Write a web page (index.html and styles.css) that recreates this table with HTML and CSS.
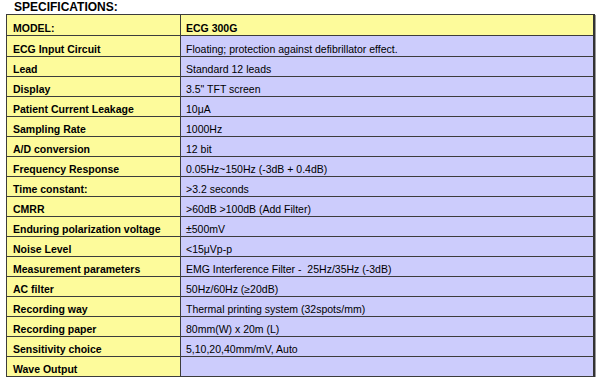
FILE: index.html
```html
<!DOCTYPE html>
<html>
<head>
<meta charset="utf-8">
<link rel="stylesheet" href="styles.css">
</head>
<body>
<div class="title">SPECIFICATIONS:</div>
<table class="spec">
  <tr class="tall"><td class="k">MODEL:</td><td class="v head">ECG 300G</td></tr>
  <tr class="tall"><td class="k">ECG Input Circuit</td><td class="v">Floating; protection against defibrillator effect.</td></tr>
  <tr><td class="k">Lead</td><td class="v">Standard 12 leads</td></tr>
  <tr><td class="k">Display</td><td class="v">3.5" TFT screen</td></tr>
  <tr><td class="k">Patient Current Leakage</td><td class="v">10μA</td></tr>
  <tr><td class="k">Sampling Rate</td><td class="v">1000Hz</td></tr>
  <tr><td class="k">A/D conversion</td><td class="v">12 bit</td></tr>
  <tr><td class="k">Frequency Response</td><td class="v">0.05Hz~150Hz (-3dB + 0.4dB)</td></tr>
  <tr><td class="k">Time constant:</td><td class="v">&gt;3.2 seconds</td></tr>
  <tr><td class="k">CMRR</td><td class="v">&gt;60dB &gt;100dB (Add Filter)</td></tr>
  <tr><td class="k">Enduring polarization voltage</td><td class="v">±500mV</td></tr>
  <tr><td class="k">Noise Level</td><td class="v">&lt;15μVp-p</td></tr>
  <tr><td class="k">Measurement parameters</td><td class="v">EMG Interference Filter -&nbsp; 25Hz/35Hz (-3dB)</td></tr>
  <tr><td class="k">AC filter</td><td class="v">50Hz/60Hz (≥20dB)</td></tr>
  <tr><td class="k">Recording way</td><td class="v">Thermal printing system (32spots/mm)</td></tr>
  <tr><td class="k">Recording paper</td><td class="v">80mm(W) x 20m (L)</td></tr>
  <tr><td class="k">Sensitivity choice</td><td class="v">5,10,20,40mm/mV, Auto</td></tr>
  <tr><td class="k">Wave Output</td><td class="v"></td></tr>
</table>
</body>
</html>
```
FILE: styles.css
```css
html, body {
  margin: 0;
  padding: 0;
  background: #ffffff;
}
body {
  font-family: "Liberation Sans", Arial, sans-serif;
  color: #000;
}
.title {
  margin-left: 14px;
  height: 13px;
  padding-top: 1px;
  font-size: 12px;
  line-height: 12px;
  font-weight: bold;
}
.spec {
  margin-left: 6px;
  width: 589px;
  border-collapse: collapse;
  table-layout: fixed;
  box-shadow: 1px 1px 0 #9a9a9a;
  border-right: 2px solid #333;
}
.spec tr {
  height: 20px;
}
.spec tr.tall {
  height: 21px;
}
.spec td {
  border: 1px solid #3c3c3c;
  font-size: 10.5px;
  line-height: 12px;
  vertical-align: bottom;
  padding: 0 0 1px 0;
  white-space: nowrap;
}
.spec td.k {
  width: 167px;
  background: #fdfb9b;
  font-weight: bold;
  padding-left: 6px;
}
.spec td.v {
  background: #ccccfc;
  padding-left: 5px;
}
.spec td.v.head {
  background: #fdfb9b;
  font-weight: bold;
}
```
